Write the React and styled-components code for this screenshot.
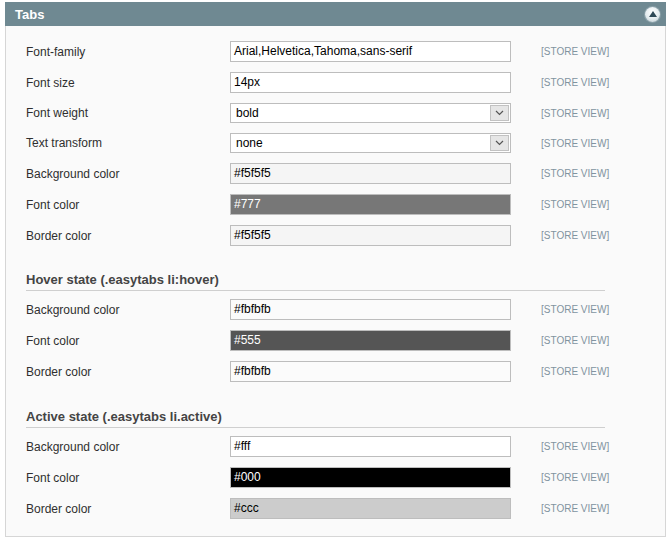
import React from 'react';
import styled, { createGlobalStyle } from 'styled-components';

const GlobalStyle = createGlobalStyle`
  body {
    margin: 0;
    background: #ffffff;
    font-family: "Liberation Sans", Arial, sans-serif;
  }
`;

const basicRows = [
  { label: 'Font-family', value: 'Arial,Helvetica,Tahoma,sans-serif', bg: '#ffffff', fg: '#000' },
  { label: 'Font size', value: '14px', bg: '#ffffff', fg: '#000' },
  { label: 'Font weight', value: 'bold', select: true },
  { label: 'Text transform', value: 'none', select: true },
  { label: 'Background color', value: '#f5f5f5', bg: '#f5f5f5', fg: '#000' },
  { label: 'Font color', value: '#777', bg: '#777777', fg: '#fff' },
  { label: 'Border color', value: '#f5f5f5', bg: '#f5f5f5', fg: '#000' },
];

const hoverRows = [
  { label: 'Background color', value: '#fbfbfb', bg: '#fbfbfb', fg: '#000' },
  { label: 'Font color', value: '#555', bg: '#555555', fg: '#fff' },
  { label: 'Border color', value: '#fbfbfb', bg: '#fbfbfb', fg: '#000' },
];

const activeRows = [
  { label: 'Background color', value: '#fff', bg: '#ffffff', fg: '#000' },
  { label: 'Font color', value: '#000', bg: '#000000', fg: '#fff' },
  { label: 'Border color', value: '#ccc', bg: '#cccccc', fg: '#000' },
];

const ChevronDown = () => (
  <svg width="9" height="6" viewBox="0 0 9 6">
    <path d="M1 1 L4.5 4.5 L8 1" fill="none" stroke="#555" strokeWidth="1.2" />
  </svg>
);

const FieldRow = ({ row }) => (
  <Row $h={row.select ? 20 : 21}>
    <Label>{row.label}</Label>
    {row.select ? (
      <SelectBox>
        <SelectText>{row.value}</SelectText>
        <SelectButton><ChevronDown /></SelectButton>
      </SelectBox>
    ) : (
      <Input $bg={row.bg} $fg={row.fg}>{row.value}</Input>
    )}
    <Scope>[STORE VIEW]</Scope>
  </Row>
);

const App = () => (
  <>
    <GlobalStyle />
    <Page>
      <Panel>
        <Header>
          <HeaderTitle>Tabs</HeaderTitle>
          <Toggle>
            <svg width="8" height="6" viewBox="0 0 8 6">
              <path d="M4 0 L8 6 L0 6 Z" fill="#2f4a57" />
            </svg>
          </Toggle>
        </Header>
        <Body>
          <Group>
            {basicRows.map((r) => <FieldRow key={r.label} row={r} />)}
          </Group>
          <SectionTitle $top={26}>Hover state (.easytabs li:hover)</SectionTitle>
          <Group>
            {hoverRows.map((r) => <FieldRow key={r.label} row={r} />)}
          </Group>
          <SectionTitle $top={27}>Active state (.easytabs li.active)</SectionTitle>
          <Group>
            {activeRows.map((r) => <FieldRow key={r.label} row={r} />)}
          </Group>
        </Body>
      </Panel>
    </Page>
  </>
);

const Page = styled.div`
  width: 670px;
  height: 540px;
  padding: 2px 4px 0 5px;
  box-sizing: border-box;
`;

const Panel = styled.div`
  width: 661px;
`;

const Header = styled.div`
  height: 24px;
  background: #6f8992;
  display: flex;
  align-items: center;
  justify-content: space-between;
  padding: 0 6px 0 10px;
`;

const HeaderTitle = styled.div`
  color: #ffffff;
  font-weight: bold;
  font-size: 13px;
`;

const Toggle = styled.div`
  width: 15px;
  height: 15px;
  border-radius: 50%;
  background: radial-gradient(circle at 50% 35%, #ffffff 0%, #e4ecef 55%, #b7c6cc 100%);
  box-shadow: 0 0 0 1px #8aa0a8;
  display: flex;
  align-items: center;
  justify-content: center;
  padding-bottom: 1px;
  box-sizing: border-box;
`;

const Body = styled.div`
  background: #fafafa;
  border: 1px solid #d6d6d6;
  border-top: none;
  height: 511px;
  box-sizing: border-box;
  padding: 15px 20px 0 20px;
`;

const Group = styled.div`
  display: flex;
  flex-direction: column;
  gap: 10px;
`;

const Row = styled.div`
  display: grid;
  grid-template-columns: 204px 281px auto;
  align-items: center;
  height: ${({ $h }) => $h}px;
`;

const Label = styled.div`
  font-size: 12px;
  color: #2f2f2f;
`;

const Input = styled.div`
  height: 21px;
  box-sizing: border-box;
  border: 1px solid #bdbdbd;
  background: ${({ $bg }) => $bg};
  color: ${({ $fg }) => $fg};
  font-size: 12px;
  line-height: 19px;
  padding-left: 3px;
  white-space: nowrap;
  overflow: hidden;
`;

const SelectBox = styled.div`
  height: 20px;
  box-sizing: border-box;
  border: 1px solid #bdbdbd;
  background: #ffffff;
  display: flex;
  align-items: stretch;
`;

const SelectText = styled.div`
  flex: 1;
  font-size: 12px;
  line-height: 18px;
  padding-left: 5px;
  color: #000;
`;

const SelectButton = styled.div`
  width: 17px;
  margin: 1px;
  background: #e6e6e6;
  border: 1px solid #c2c2c2;
  display: flex;
  align-items: center;
  justify-content: center;
`;

const Scope = styled.div`
  margin-left: 30px;
  font-size: 10px;
  color: #8193a0;
  white-space: nowrap;
`;

const SectionTitle = styled.div`
  width: 579px;
  margin: ${({ $top }) => $top}px 0 8px 0;
  padding-bottom: 3px;
  border-bottom: 1px solid #cfcfcf;
  font-size: 13px;
  font-weight: bold;
  color: #444444;
`;

export default App;
